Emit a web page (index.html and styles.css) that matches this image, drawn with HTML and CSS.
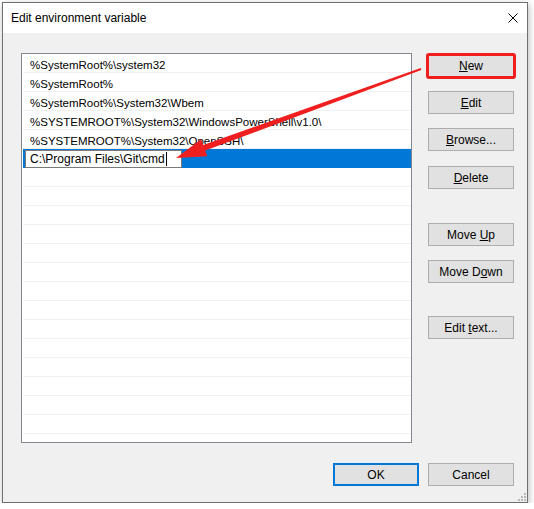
FILE: index.html
```html
<!DOCTYPE html>
<html>
<head>
<meta charset="utf-8">
<title>Edit environment variable</title>
<link rel="stylesheet" href="styles.css">
</head>
<body>
<div class="window">
  <div class="titlebar">
    <span class="title">Edit environment variable</span>
    <svg class="close" width="10" height="10" viewBox="0 0 10 10"><path d="M0.5 0.5L9.5 9.5M9.5 0.5L0.5 9.5" stroke="#000" stroke-width="1" fill="none"/></svg>
  </div>
  <div class="content">
    <div class="main">
      <div class="listbox">
        <div class="row">%SystemRoot%\system32</div>
        <div class="row">%SystemRoot%</div>
        <div class="row">%SystemRoot%\System32\Wbem</div>
        <div class="row">%SYSTEMROOT%\System32\WindowsPowerShell\v1.0\</div>
        <div class="row">%SYSTEMROOT%\System32\OpenSSH\</div>
        <div class="row selected"><span class="editbox">C:\Program Files\Git\cmd<span class="caret"></span></span></div>
        <div class="row"></div>
        <div class="row"></div>
        <div class="row"></div>
        <div class="row"></div>
        <div class="row"></div>
        <div class="row"></div>
        <div class="row"></div>
        <div class="row"></div>
        <div class="row"></div>
        <div class="row"></div>
        <div class="row"></div>
        <div class="row"></div>
        <div class="row"></div>
        <div class="row"></div>
      </div>
      <div class="side">
        <div class="btn-wrap first">
          <button class="btn"><u>N</u>ew</button>
          <span class="callout"></span>
        </div>
        <button class="btn gap"><u>E</u>dit</button>
        <button class="btn gap"><u>B</u>rowse...</button>
        <button class="btn gap-15"><u>D</u>elete</button>
        <button class="btn gap-34">Move <u>U</u>p</button>
        <button class="btn gap">Move D<u>o</u>wn</button>
        <button class="btn gap-33">Edit <u>t</u>ext...</button>
      </div>
    </div>
    <div class="footer">
      <button class="btn default">OK</button>
      <button class="btn">Cancel</button>
    </div>
  </div>
  <svg class="grip" width="8" height="8" viewBox="0 0 8 8">
    <rect x="6" y="0" width="2" height="2"/>
    <rect x="3" y="3" width="2" height="2"/>
    <rect x="6" y="3" width="2" height="2"/>
    <rect x="0" y="6" width="2" height="2"/>
    <rect x="3" y="6" width="2" height="2"/>
    <rect x="6" y="6" width="2" height="2"/>
  </svg>
</div>
<svg class="arrow" width="534" height="509" viewBox="0 0 534 509">
  <polygon points="420.7,68.1 203.2,145 201.1,139.3 176,158 207.3,156.3 205.2,150.6 421.3,69.9"/>
</svg>
</body>
</html>
```

FILE: styles.css
```css
body {
  margin: 0;
  background: #fff;
  font-family: "Liberation Sans", Arial, sans-serif;
  font-size: 12px;
  color: #000;
}

.window {
  position: relative;
  margin: 2px 0 0 2px;
  width: 526px;
  height: 501px;
  box-sizing: border-box;
  border: 1px solid #6f6f6f;
  background: #f0f0f0;
  box-shadow: 1px 2px 7px rgba(0, 0, 0, 0.28);
  display: flex;
  flex-direction: column;
}

.titlebar {
  height: 30px;
  flex: none;
  background: #fff;
  display: flex;
  align-items: center;
  justify-content: space-between;
  padding: 0 9px 0 8px;
}

.close {
  display: block;
}

.content {
  flex: 1;
  padding: 20px 13px 16px 18px;
  display: flex;
  flex-direction: column;
}

.main {
  display: flex;
  gap: 16px;
}

.listbox {
  width: 391px;
  height: 390px;
  box-sizing: border-box;
  border: 1px solid #828790;
  background: #fff;
  overflow: hidden;
}

.row {
  height: 16px;
  padding: 2px 0 0 7px;
  margin-left: 1px;
  font-size: 11.5px;
  line-height: 18px;
  border-bottom: 1px solid #f0f0f0;
  white-space: nowrap;
}

.row.selected {
  height: 17px;
  padding: 1px 0 0 2px;
  background: #0078d7;
  border-bottom-color: #0078d7;
  font-size: 12px;
}

.editbox {
  display: block;
  width: 157px;
  height: 18px;
  box-sizing: border-box;
  border: 1px solid #7a7a7a;
  background: #fff;
  padding-left: 4px;
  line-height: 17px;
}

.caret {
  display: inline-block;
  width: 1px;
  height: 14px;
  margin-left: 1px;
  background: #000;
  vertical-align: -3px;
}

.side {
  display: flex;
  flex-direction: column;
  width: 86px;
}

.btn {
  display: block;
  width: 86px;
  height: 23px;
  box-sizing: border-box;
  border: 1px solid #adadad;
  background: #e1e1e1;
  font-family: inherit;
  font-size: 12px;
  color: #000;
  padding: 0;
  margin: 0;
  line-height: 20px;
}

.btn-wrap {
  position: relative;
}

.btn-wrap.first {
  margin-top: 1px;
}

.callout {
  position: absolute;
  left: -2px;
  right: -2px;
  top: -1px;
  bottom: -2px;
  border: 3px solid #f01f1f;
  border-radius: 3px;
}

.gap { margin-top: 14px; }
.gap-15 { margin-top: 15px; }
.gap-34 { margin-top: 34px; }
.gap-33 { margin-top: 33px; }

.footer {
  margin-top: 20px;
  display: flex;
  justify-content: flex-end;
  gap: 9px;
}

.btn.default {
  border: 2px solid #0078d7;
}

.grip {
  position: absolute;
  right: 1px;
  bottom: 1px;
  fill: #b9b9b9;
}

.arrow {
  position: absolute;
  left: 0;
  top: 0;
  fill: #f01f1f;
}
```
